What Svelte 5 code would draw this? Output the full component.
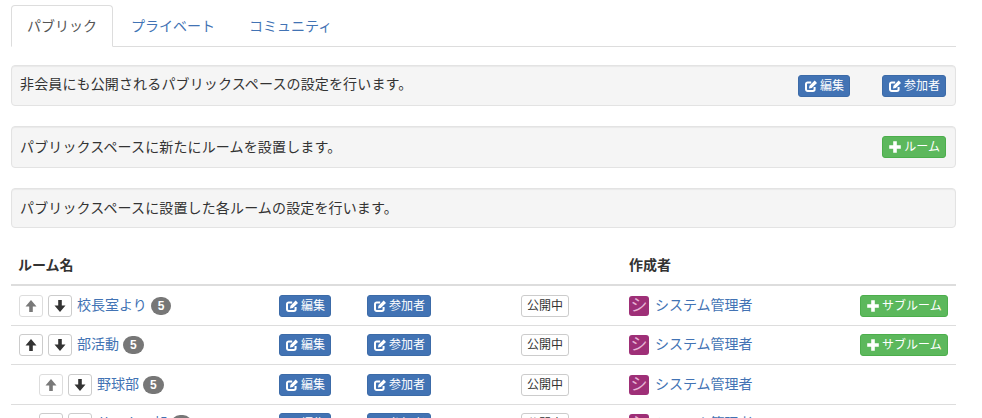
<script lang="ts">
    const tabs = ["パブリック", "プライベート", "コミュニティ"];

    const rooms = [
        { name: "校長室より", depth: 0, upOff: true, sub: true },
        { name: "部活動", depth: 0, upOff: false, sub: true },
        { name: "野球部", depth: 1, upOff: true, sub: false },
        { name: "サッカー部", depth: 1, upOff: false, sub: false },
    ];
</script>

{#snippet editIcon()}
    <svg class="ico" viewBox="0 0 14 14" width="14" height="14">
        <path d="M10.600 8v2.300a1.700 1.700 0 0 1-1.700 1.700H3.700A1.700 1.700 0 0 1 2 10.300V5.100a1.700 1.700 0 0 1 1.700-1.700h3.500" fill="none" stroke="currentColor" stroke-width="2" />
        <path d="M5.500 6.800 10.700 1.600l2.300 2.300-5.200 5.200-2.800.5z" fill="currentColor" />
    </svg>
{/snippet}

{#snippet plusIcon()}
    <svg class="ico" viewBox="0 0 14 14" width="14" height="14">
        <path d="M5.200 1.200h3.600v4h4v3.600h-4v4H5.200v-4h-4V5.200h4z" fill="currentColor" />
    </svg>
{/snippet}

{#snippet arrow(up: boolean)}
    <svg viewBox="0 0 14 14" width="14" height="14" class={up ? "" : "flip"}>
        <path d="M7 1 12.500 7.500H8.800V13H5.200V7.500H1.500z" fill="currentColor" />
    </svg>
{/snippet}

<div class="page">
    <ul class="tabs">
        {#each tabs as t, i}
            <li class={i === 0 ? "active" : ""}>{t}</li>
        {/each}
    </ul>

    <div class="well first">
        <span>非会員にも公開されるパブリックスペースの設定を行います。</span>
        <div class="well-actions">
            <button class="btn blue">{@render editIcon()}編集</button>
            <button class="btn blue">{@render editIcon()}参加者</button>
        </div>
    </div>

    <div class="well second">
        <span>パブリックスペースに新たにルームを設置します。</span>
        <button class="btn green">{@render plusIcon()}ルーム</button>
    </div>

    <div class="well third">
        <span>パブリックスペースに設置した各ルームの設定を行います。</span>
    </div>

    <table>
        <colgroup>
            <col class="c1" /><col class="c2" /><col class="c3" /><col class="c4" /><col class="c5" /><col class="c6" />
        </colgroup>
        <thead>
            <tr>
                <th class="first-head">ルーム名</th>
                <th></th>
                <th></th>
                <th></th>
                <th>作成者</th>
                <th></th>
            </tr>
        </thead>
        <tbody>
            {#each rooms as r}
                <tr>
                    <td>
                        <div class="name" class:child={r.depth > 0}>
                            <button class="move" class:off={r.upOff}>{@render arrow(true)}</button>
                            <button class="move">{@render arrow(false)}</button>
                            <span class="link">{r.name}</span>
                            <span class="badge">5</span>
                        </div>
                    </td>
                    <td><button class="btn blue">{@render editIcon()}編集</button></td>
                    <td><button class="btn blue">{@render editIcon()}参加者</button></td>
                    <td><button class="btn plain">公開中</button></td>
                    <td>
                        <div class="author">
                            <span class="avatar">シ</span>
                            <span class="link">システム管理者</span>
                        </div>
                    </td>
                    <td>
                        {#if r.sub}
                            <button class="btn green">{@render plusIcon()}サブルーム</button>
                        {/if}
                    </td>
                </tr>
            {/each}
        </tbody>
    </table>
</div>

<style>
    :global(body) {
        overflow: hidden;
        background: #fff;
    }

    .page {
        box-sizing: border-box;
        width: 945px;
        height: 418px;
        margin-left: 11px;
        padding-top: 5px;
        overflow: hidden;
        font-family: "Liberation Sans", "Noto Sans CJK JP", sans-serif;
        font-size: 14px;
        line-height: 20px;
        color: #333;
    }

    .tabs {
        display: flex;
        height: 41px;
        margin: 0;
        padding: 0;
        list-style: none;
        border-bottom: 1px solid #ddd;
    }

    .tabs li {
        box-sizing: border-box;
        height: 42px;
        padding: 10px 15px;
        margin-right: 2px;
        border: 1px solid transparent;
        border-radius: 4px 4px 0 0;
        color: #4273b4;
    }

    .tabs li.active {
        color: #555;
        background: #fff;
        border-color: #ddd #ddd #fff;
    }

    .well {
        box-sizing: border-box;
        display: flex;
        align-items: center;
        justify-content: space-between;
        padding: 0 9px 0 8px;
        background: #f5f5f5;
        border: 1px solid #e3e3e3;
        border-radius: 4px;
        box-shadow: inset 0 1px 1px rgba(0, 0, 0, 0.05);
        letter-spacing: 0.14px;
    }

    .well.first {
        height: 41px;
        margin-top: 18px;
    }

    .well.first > span {
        margin-top: -4px;
    }

    .well.second {
        height: 42px;
        margin-top: 20px;
    }

    .well.third {
        height: 40px;
        margin-top: 20px;
        margin-bottom: 20px;
    }

    .well-actions {
        display: flex;
        gap: 32px;
    }

    .btn {
        display: inline-flex;
        align-items: center;
        gap: 2px;
        box-sizing: border-box;
        height: 22px;
        padding: 0 5px;
        border: 1px solid transparent;
        border-radius: 3px;
        font: inherit;
        font-size: 12px;
        line-height: 18px;
        letter-spacing: 0;
        vertical-align: top;
        white-space: nowrap;
    }

    .blue {
        color: #fff;
        background: #4273b4;
        border-color: #3c6ba8;
    }

    .green {
        color: #fff;
        background: #5cb85c;
        border-color: #4cae4c;
    }

    .plain {
        color: #333;
        background: #fff;
        border-color: #ccc;
    }

    .ico {
        flex: none;
    }

    table {
        width: 945px;
        table-layout: fixed;
        border-collapse: separate;
        border-spacing: 0;
    }

    .c1 { width: 260px; }
    .c2 { width: 88px; }
    .c3 { width: 154px; }
    .c4 { width: 108px; }
    .c5 { width: 231px; }
    .c6 { width: 104px; }

    th {
        padding: 7px 8px 9px;
        text-align: left;
        font-weight: bold;
        border-bottom: 2px solid #ddd;
    }

    th.first-head {
        padding-left: 7px;
    }

    td {
        padding: 8px;
        line-height: 22px;
        border-bottom: 1px solid #ddd;
        vertical-align: middle;
    }

    /* reference rows alternate 40/39px */
    tbody tr:nth-child(odd) td {
        padding-top: 9px;
    }

    .name {
        display: flex;
        align-items: center;
        gap: 5px;
    }

    .name.child {
        padding-left: 20px;
    }

    .name .link {
        margin-top: -2px;
    }

    .move {
        display: inline-flex;
        align-items: center;
        justify-content: center;
        box-sizing: border-box;
        width: 24px;
        height: 22px;
        padding: 0;
        color: #333;
        background: #fff;
        border: 1px solid #ccc;
        border-radius: 3px;
    }

    .move.off {
        opacity: 0.65;
    }

    .flip {
        transform: rotate(180deg);
    }

    .link {
        color: #4273b4;
    }

    .badge {
        display: inline-block;
        padding: 3px 7px;
        margin-left: -1px;
        border-radius: 10px;
        background: #777;
        color: #fff;
        font-size: 12px;
        font-weight: bold;
        line-height: 12px;
        text-align: center;
    }

    .author {
        display: flex;
        align-items: center;
        gap: 6px;
    }

    .author .link {
        margin-top: -2px;
    }

    .avatar {
        display: flex;
        align-items: center;
        justify-content: center;
        width: 20px;
        height: 20px;
        border-radius: 3px;
        background: #9e2f77;
        color: #e8b5d5;
        font-size: 17px;
    }
</style>
